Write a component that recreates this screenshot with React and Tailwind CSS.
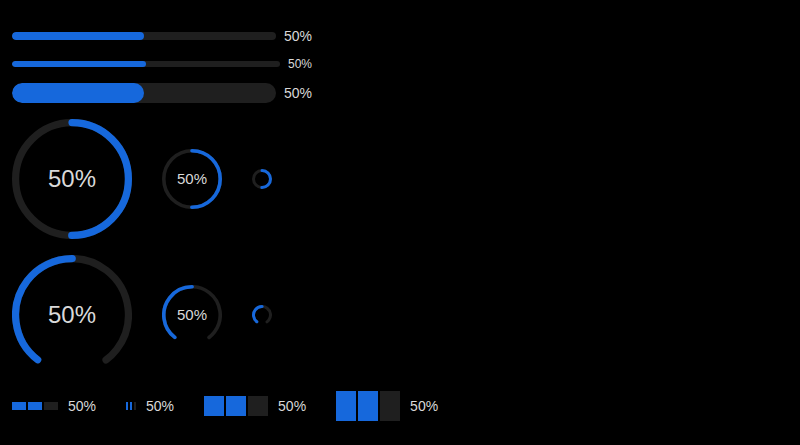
import React from "react";

const BLUE = "#1668dc";
const TRAIL = "#1f1f1f";

function Circle({ size, stroke, dashboard, showText, fontClass }) {
  const r = 50 - stroke / 2;
  const C = 2 * Math.PI * r;
  const total = dashboard ? (285 / 360) * C : C;
  const fill = total * 0.5;
  const rot = dashboard ? 127.5 : -90;
  return (
    <div className="relative shrink-0" style={{ width: size, height: size }}>
      <svg viewBox="0 0 100 100" width={size} height={size} className="block">
        <circle
          cx="50"
          cy="50"
          r={r}
          fill="none"
          stroke={TRAIL}
          strokeWidth={stroke}
          strokeLinecap="round"
          strokeDasharray={`${total} ${C}`}
          transform={`rotate(${rot} 50 50)`}
        />
        <circle
          cx="50"
          cy="50"
          r={r}
          fill="none"
          stroke={BLUE}
          strokeWidth={stroke}
          strokeLinecap="round"
          strokeDasharray={`${fill} ${C}`}
          transform={`rotate(${rot} 50 50)`}
        />
      </svg>
      {showText && (
        <div className={`absolute inset-0 flex items-center justify-center text-[#d9d9d9] ${fontClass}`}>
          50%
        </div>
      )}
    </div>
  );
}

export default function App() {
  return (
    <div
      className="w-[800px] h-[445px] bg-black overflow-hidden pl-3 flex flex-col"
      style={{ fontFamily: '"Liberation Sans", Arial, sans-serif' }}
    >
      {/* line 1 */}
      <div className="mt-[25px] h-[22px] flex items-center">
        <div className="w-[264px] h-[8px] rounded-full bg-[#1f1f1f] overflow-hidden">
          <div className="w-1/2 h-full rounded-full bg-[#1668dc]" />
        </div>
        <span className="ml-2 text-[14px] text-[#d9d9d9] leading-[22px]">50%</span>
      </div>
      {/* line 2 small */}
      <div className="mt-[7px] h-[20px] flex items-center">
        <div className="w-[268px] h-[6px] rounded-full bg-[#1f1f1f] overflow-hidden">
          <div className="w-1/2 h-full rounded-full bg-[#1668dc]" />
        </div>
        <span className="ml-2 text-[12px] text-[#d9d9d9] leading-[20px]">50%</span>
      </div>
      {/* line 3 thick */}
      <div className="mt-[8px] h-[22px] flex items-center">
        <div className="w-[264px] h-[20px] rounded-full bg-[#1f1f1f] overflow-hidden">
          <div className="w-1/2 h-full rounded-full bg-[#1668dc]" />
        </div>
        <span className="ml-2 text-[14px] text-[#d9d9d9] leading-[22px]">50%</span>
      </div>
      {/* circles */}
      <div className="mt-[15px] flex items-center gap-[30px]">
        <Circle size={120} stroke={6} showText fontClass="text-[24px]" />
        <Circle size={60} stroke={6} showText fontClass="text-[15px]" />
        <Circle size={20} stroke={15} />
      </div>
      {/* dashboards */}
      <div className="mt-[16px] flex items-center gap-[30px]">
        <Circle size={120} stroke={6} dashboard showText fontClass="text-[24px]" />
        <Circle size={60} stroke={6} dashboard showText fontClass="text-[15px]" />
        <Circle size={20} stroke={15} dashboard />
      </div>
      {/* steps */}
      <div className="mt-[16px] h-[30px] flex items-center gap-[30px] text-[14px] text-[#d9d9d9]">
        <div className="flex items-center">
          <div className="w-[14px] h-[8px] bg-[#1668dc] mr-[2px]" />
          <div className="w-[14px] h-[8px] bg-[#1668dc] mr-[2px]" />
          <div className="w-[14px] h-[8px] bg-[#1f1f1f] mr-[2px]" />
          <span className="ml-2">50%</span>
        </div>
        <div className="flex items-center">
          <div className="w-[2px] h-[8px] bg-[#1668dc] mr-[2px]" />
          <div className="w-[2px] h-[8px] bg-[#1668dc] mr-[2px]" />
          <div className="w-[2px] h-[8px] bg-[#1f1f1f] mr-[2px]" />
          <span className="ml-2">50%</span>
        </div>
        <div className="flex items-center">
          <div className="w-[20px] h-[20px] bg-[#1668dc] mr-[2px]" />
          <div className="w-[20px] h-[20px] bg-[#1668dc] mr-[2px]" />
          <div className="w-[20px] h-[20px] bg-[#1f1f1f] mr-[2px]" />
          <span className="ml-2">50%</span>
        </div>
        <div className="flex items-center">
          <div className="w-[20px] h-[30px] bg-[#1668dc] mr-[2px]" />
          <div className="w-[20px] h-[30px] bg-[#1668dc] mr-[2px]" />
          <div className="w-[20px] h-[30px] bg-[#1f1f1f] mr-[2px]" />
          <span className="ml-2">50%</span>
        </div>
      </div>
    </div>
  );
}
